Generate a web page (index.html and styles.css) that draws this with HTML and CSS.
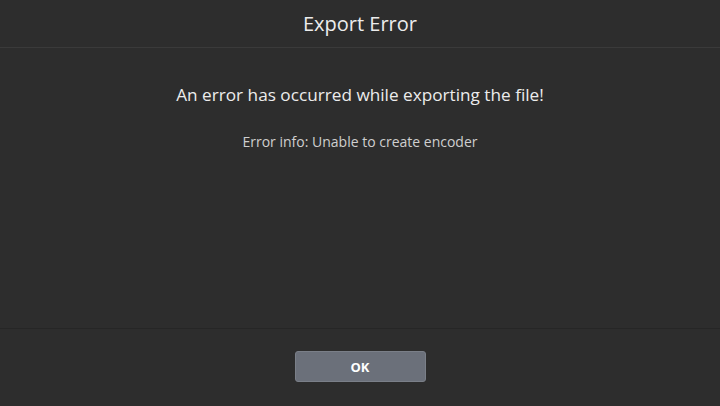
FILE: index.html
```html
<!DOCTYPE html>
<html>
<head>
<meta charset="utf-8">
<link rel="stylesheet" href="styles.css">
</head>
<body>
<div class="dialog">
  <header class="dialog-header">Export Error</header>
  <main class="dialog-body">
    <p class="message">An error has occurred while exporting the file!</p>
    <p class="info">Error info: Unable to create encoder</p>
  </main>
  <footer class="dialog-footer">
    <button class="btn">OK</button>
  </footer>
</div>
</body>
</html>
```
FILE: styles.css
```css
html, body {
  margin: 0;
  padding: 0;
  background: #2d2d2d;
}
.dialog {
  width: 720px;
  height: 406px;
  display: flex;
  flex-direction: column;
  font-family: "Open Sans", "Noto Sans", sans-serif;
  color: #e6e6e6;
}
.dialog-header {
  height: 47px;
  border-bottom: 1px solid #3a3a3a;
  display: flex;
  align-items: center;
  justify-content: center;
  font-size: 20px;
  color: #ececec;
  box-sizing: content-box;
}
.dialog-body {
  height: 281px;
  border-bottom: 1px solid #262626;
  display: flex;
  flex-direction: column;
  align-items: center;
  padding-top: 35px;
  box-sizing: border-box;
}
.message {
  margin: 0;
  font-size: 17.2px;
  line-height: 24px;
  color: #ececec;
}
.info {
  margin: 25px 0 0;
  font-size: 14px;
  line-height: 20px;
  color: #cfcfcf;
}
.dialog-footer {
  flex: 1;
  display: flex;
  align-items: flex-start;
  justify-content: center;
  padding-top: 22px;
}
.btn {
  width: 131px;
  height: 31px;
  border: 1px solid #7a7f88;
  border-radius: 3px;
  background: #6b707a;
  color: #ffffff;
  font-family: "Open Sans", "Noto Sans", sans-serif;
  font-weight: 700;
  font-size: 13px;
  padding: 0;
}
```
